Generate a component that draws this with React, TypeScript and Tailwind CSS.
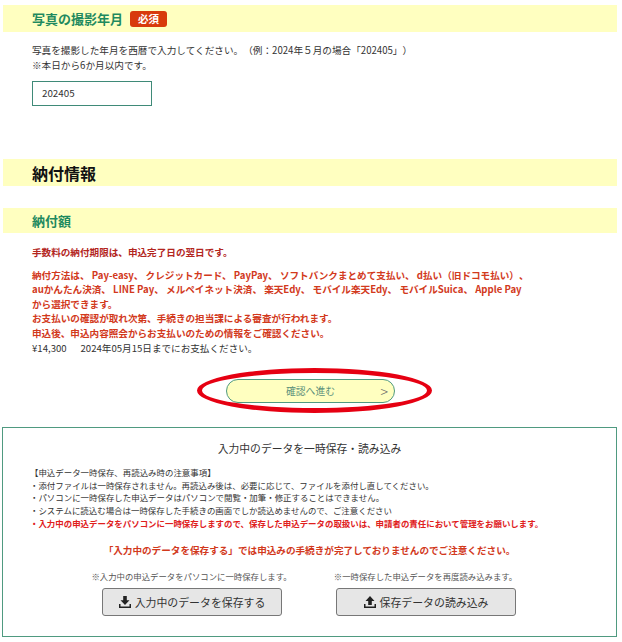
const font = { fontFamily: '"Noto Sans CJK JP", "Noto Sans", sans-serif' };

function SaveIcon({ up }: { up?: boolean }) {
  return (
    <svg width="14" height="14" viewBox="0 0 14 14" fill="#222" aria-hidden>
      {up ? <path d="M7 1 L11.5 6 H8.8 V10 H5.2 V6 H2.5 Z" /> : <path d="M5.2 1 H8.8 V5.2 H11.5 L7 10 L2.5 5.2 H5.2 Z" />}
      <path d="M1 9 H2.5 V11.6 H11.5 V9 H13 V13 H1 Z" />
    </svg>
  );
}

export default function App() {
  return (
    <div
      style={font}
      className="h-[642px] w-[622px] overflow-hidden bg-white pt-[5px] text-[9.8px] text-[#333] [text-spacing-trim:space-all]"
    >
      <section>
        <div className="mx-[3px] flex h-[27px] w-[614px] items-center gap-[7px] bg-[#ffffc0] pl-[29px]">
          <h3 className="text-[13px] font-bold text-[#1f8a5f]">写真の撮影年月</h3>
          <span className="rounded-[3px] bg-[#d83a0c] px-[8px] text-[10.5px] leading-[16px] font-bold text-white">必須</span>
        </div>
        <div className="pt-[11px] pl-[32px] text-[9.65px] leading-[15px]">
          <p>写真を撮影した年月を西暦で入力してください。（例：2024年５月の場合「202405」）</p>
          <p>※本日から6か月以内です。</p>
        </div>
        <div className="mt-[8px] ml-[32px] flex h-[25px] w-[120px] items-center border border-[#3f8a78] pl-[9px]">202405</div>
      </section>

      <h2 className="mx-[3px] mt-[53px] flex h-[27px] w-[614px] items-center bg-[#ffffc0] pl-[29px] text-[16px] font-bold text-[#111]">
        納付情報
      </h2>

      <section className="mt-[22px]">
        <h3 className="mx-[3px] flex h-[25px] w-[614px] items-center bg-[#ffffc0] pl-[29px] text-[13px] font-bold text-[#1f8a5f]">
          納付額
        </h3>
        <div className="pt-[12px] pl-[32px] text-[9.6px] leading-[14.6px]">
          <p className="font-bold text-[#b3261e]">手数料の納付期限は、申込完了日の翌日です。</p>
          <p className="mt-[8px] font-bold text-[#d2391c]">
            納付方法は、 Pay-easy、 クレジットカード、 PayPay、 ソフトバンクまとめて支払い、 d払い（旧ドコモ払い）、
            <br />
            auかんたん決済、 LINE Pay、 メルペイネット決済、 楽天Edy、 モバイル楽天Edy、 モバイルSuica、 Apple Pay
            <br />
            から選択できます。
            <br />
            お支払いの確認が取れ次第、手続きの担当課による審査が行われます。
            <br />
            申込後、申込内容照会からお支払いのための情報をご確認ください。
          </p>
          <p className="whitespace-pre">¥14,300　  2024年05月15日までにお支払ください。</p>
        </div>
      </section>

      <div className="relative mt-[24px] flex justify-center">
        <button className="relative ml-[-1px] flex h-[24px] w-[169px] items-center justify-center rounded-full border border-[#4f9a80] bg-[#ffffc0] text-[#5a8f7a]">
          確認へ進む
          <span className="absolute right-[6px] text-[14px] font-light text-[#666]">&gt;</span>
        </button>
        <span className="absolute top-[-11px] left-[197px] h-[45px] w-[235px] rounded-[50%] border-[5px] border-[#e60012]" />
      </div>

      <section className="mx-[2px] mt-[24px] h-[210px] w-[615px] border border-[#4f9a80] px-[27px]">
        <h4 className="pt-[11px] text-center text-[10.8px] leading-[18px] text-[#333]">入力中のデータを一時保存・読み込み</h4>
        <div className="mt-[8.6px] text-[8.45px] leading-[12.8px]">
          <p>【申込データ一時保存、再読込み時の注意事項】</p>
          <p>・添付ファイルは一時保存されません。再読込み後は、必要に応じて、ファイルを添付し直してください。</p>
          <p>・パソコンに一時保存した申込データはパソコンで閲覧・加筆・修正することはできません。</p>
          <p>・システムに読込む場合は一時保存した手続きの画面でしか読込めませんので、ご注意ください</p>
          <p className="font-bold text-[#e0201c]">・入力中の申込データをパソコンに一時保存しますので、保存した申込データの取扱いは、申請者の責任において管理をお願いします。</p>
        </div>
        <p className="mt-[13.4px] text-center text-[9.6px] leading-[14px] font-bold text-[#d2391c]">「入力中のデータを保存する」では申込みの手続きが完了しておりませんのでご注意ください。</p>
        <div className="mt-[12px] ml-[-2px] flex justify-center gap-[54px] text-[8.4px] leading-[14px] text-[#555]">
          <div className="flex w-[180px] flex-col items-center gap-[5px]">
            <p className="whitespace-nowrap">※入力中の申込データをパソコンに一時保存します。</p>
            <button className="flex h-[28px] w-[180px] items-center justify-center gap-[3px] rounded-[3px] border border-[#777] bg-[#e6e6e6] text-[10.9px] text-[#333]">
              <SaveIcon />入力中のデータを保存する
            </button>
          </div>
          <div className="flex w-[180px] flex-col items-center gap-[5px]">
            <p className="whitespace-nowrap">※一時保存した申込データを再度読み込みます。</p>
            <button className="flex h-[28px] w-[180px] items-center justify-center gap-[3px] rounded-[3px] border border-[#777] bg-[#e6e6e6] text-[10.9px] text-[#333]">
              <SaveIcon up />保存データの読み込み
            </button>
          </div>
        </div>
      </section>
    </div>
  );
}
